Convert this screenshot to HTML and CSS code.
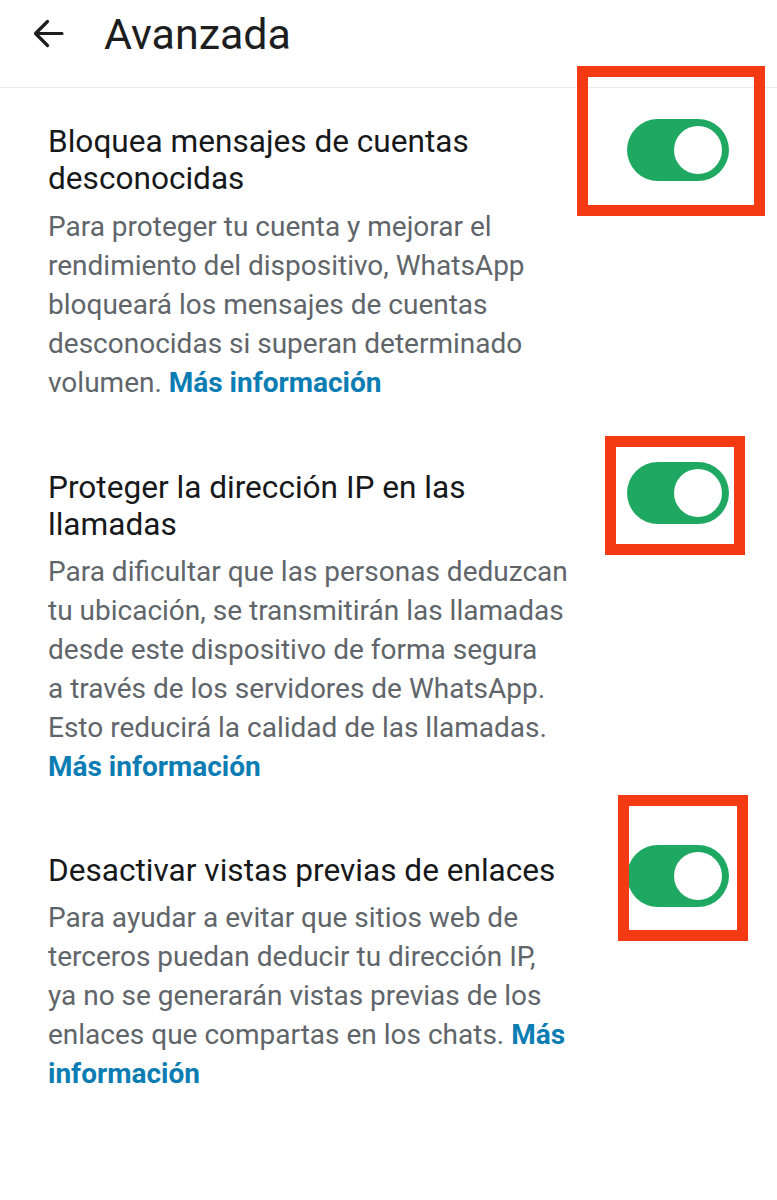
FILE: index.html
```html
<!DOCTYPE html>
<html lang="es">
<head>
<meta charset="utf-8">
<title>Avanzada</title>
<link rel="stylesheet" href="styles.css">
</head>
<body>
<header class="appbar">
  <svg class="back" viewBox="0 0 32 32" width="32" height="32" aria-hidden="true">
    <path d="M30 15.5H3.5M15.5 3.5L3.5 15.5L15.5 27.5" fill="none" stroke="#1d1d1f" stroke-width="3.2" stroke-linecap="round" stroke-linejoin="round"/>
  </svg>
  <h1 class="appbar-title">Avanzada</h1>
</header>
<main class="settings">
  <section class="setting setting-1">
    <div class="setting-text">
      <h2 class="setting-title">Bloquea mensajes de cuentas<br>desconocidas</h2>
      <p class="setting-desc">Para proteger tu cuenta y mejorar el<br>rendimiento del dispositivo, WhatsApp<br>bloqueará los mensajes de cuentas<br>desconocidas si superan determinado<br>volumen. <a class="link" href="#">Más información</a></p>
    </div>
    <div class="switch on">
      <span class="thumb"></span>
      <span class="mark mark-1"></span>
    </div>
  </section>
  <section class="setting setting-2">
    <div class="setting-text">
      <h2 class="setting-title">Proteger la dirección IP en las<br>llamadas</h2>
      <p class="setting-desc">Para dificultar que las personas deduzcan<br>tu ubicación, se transmitirán las llamadas<br>desde este dispositivo de forma segura<br>a través de los servidores de WhatsApp.<br>Esto reducirá la calidad de las llamadas.<br><a class="link" href="#">Más información</a></p>
    </div>
    <div class="switch on">
      <span class="thumb"></span>
      <span class="mark mark-2"></span>
    </div>
  </section>
  <section class="setting setting-3">
    <div class="setting-text">
      <h2 class="setting-title">Desactivar vistas previas de enlaces</h2>
      <p class="setting-desc">Para ayudar a evitar que sitios web de<br>terceros puedan deducir tu dirección IP,<br>ya no se generarán vistas previas de los<br>enlaces que compartas en los chats. <a class="link" href="#">Más<br>información</a></p>
    </div>
    <div class="switch on">
      <span class="thumb"></span>
      <span class="mark mark-3"></span>
    </div>
  </section>
</main>
</body>
</html>
```

FILE: styles.css
```css
* { box-sizing: border-box; }

html, body {
  margin: 0;
  padding: 0;
  background: #ffffff;
}

body {
  width: 777px;
  min-height: 1200px;
  font-family: Roboto, "Noto Sans", "Liberation Sans", sans-serif;
  color: #1b1c1e;
  overflow: hidden;
}

.appbar {
  height: 88px;
  display: flex;
  align-items: center;
  padding: 0 0 0 32px;
  border-bottom: 1px solid #ececec;
}

.back {
  display: block;
  flex: none;
  margin-top: -20px;
}

.appbar-title {
  margin: -20px 0 0 40px;
  font-size: 43px;
  font-weight: 400;
  line-height: 50px;
  color: #1d1e20;
}

.settings {
  padding: 0 48px;
}

.setting {
  display: flex;
  justify-content: space-between;
  align-items: flex-start;
}

.setting-1 { padding-top: 35px; }
.setting-2 { padding-top: 67px; }
.setting-3 { padding-top: 66px; }

.setting-text {
  width: 570px;
  white-space: nowrap;
}

.setting-title {
  margin: 0;
  font-size: 31.6px;
  font-weight: 400;
  line-height: 37px;
  color: #17181a;
}

.setting-desc {
  margin: 10px 0 0;
  font-size: 28px;
  line-height: 39px;
  color: #60656a;
}

.setting-2 .setting-desc { margin-top: 9px; }
.setting-3 .setting-desc { margin-top: 9px; }

.link {
  color: #0b7db3;
  font-weight: 700;
  text-decoration: none;
}

.switch {
  position: relative;
  flex: none;
  width: 102px;
  height: 62px;
  border-radius: 31px;
  background: #1fa862;
  margin-top: -4px;
}

.setting-2 .switch { margin-top: -7px; }
.setting-3 .switch { margin-top: -7px; }

.thumb {
  position: absolute;
  top: 7px;
  right: 7px;
  width: 48px;
  height: 48px;
  border-radius: 50%;
  background: #ffffff;
}

.mark {
  position: absolute;
  border: 11px solid #f43a12;
  pointer-events: none;
}

.mark-1 { left: -50px; top: -53px; width: 188px; height: 150px; }
.mark-2 { left: -22px; top: -26px; width: 140px; height: 119px; }
.mark-3 { left: -9px; top: -50px; width: 130px; height: 146px; }
```
